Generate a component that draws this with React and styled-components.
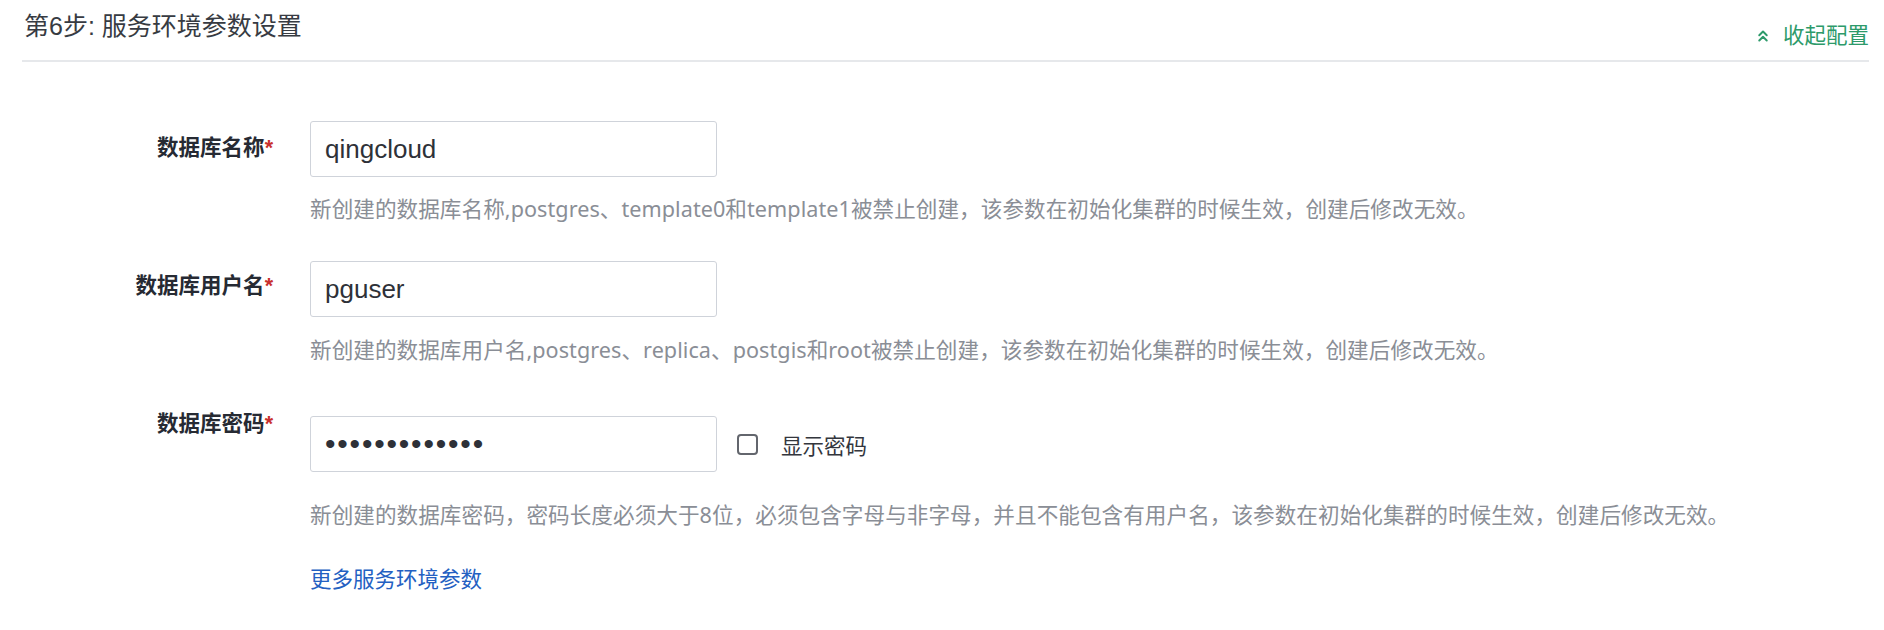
import React from "react";
import styled, { createGlobalStyle } from "styled-components";
import { ChevronsUp } from "lucide-react";

const GlobalStyle = createGlobalStyle`
    body {
        margin: 0;
        background: #ffffff;
        font-family: "Liberation Sans", "Noto Sans CJK SC", sans-serif;
    }
`

const Page = styled.div`
    width: 1884px;
    height: 630px;
    overflow: hidden;
`

const Header = styled.div`
    margin: 0 15px 0 22px;
    height: 60px;
    border-bottom: 2px solid #e6e8eb;
    display: flex;
    justify-content: space-between;
    align-items: flex-start;
`

const Title = styled.div`
    padding: 8px 0 0 2px;
    font-size: 25px;
    line-height: 36px;
    color: #373b42;
`

const Toggle = styled.div`
    padding-top: 21px;
    display: flex;
    align-items: center;
    gap: 11px;
    font-size: 21.5px;
    line-height: 30px;
    color: #2d9a6a;
    cursor: pointer;
`

const Form = styled.div`
    padding-top: 59px;
    display: flex;
    flex-direction: column;
`

const Row = styled.div`
    display: flex;
    align-items: flex-start;
    margin-top: ${p => p.$gap || 0}px;
`

const Label = styled.div`
    width: 273px;
    flex-shrink: 0;
    padding-top: ${p => p.$offset}px;
    text-align: right;
    font-size: 21.5px;
    font-weight: 700;
    line-height: 30px;
    color: #262a33;
`

const Star = styled.span`
    color: #c9302c;
`

const Field = styled.div`
    margin-left: 37px;
    display: flex;
    flex-direction: column;
    padding-top: ${p => p.$offset || 0}px;
`

const InputLine = styled.div`
    display: flex;
    align-items: center;
`

const Input = styled.input`
    box-sizing: border-box;
    width: 407px;
    height: 56px;
    padding: 0 14px;
    border: 1px solid #cfd3da;
    border-radius: 3px;
    font-family: "Liberation Sans", sans-serif;
    font-size: ${p => p.type === "password" ? 30 : 26}px;
    letter-spacing: ${p => p.type === "password" ? "1.8px" : "normal"};
    color: #2e3138;
    outline: none;
    background: #ffffff;
`

const CheckLabel = styled.label`
    margin-left: 20px;
    display: flex;
    align-items: center;
    gap: 23px;
    font-size: 21.5px;
    color: #33363d;
    cursor: pointer;
`

const Box = styled.span`
    box-sizing: border-box;
    width: 21px;
    height: 21px;
    border: 2px solid #63666d;
    border-radius: 4px;
    background: #ffffff;
`

const Help = styled.div`
    margin-top: ${p => p.$gap}px;
    font-family: "Noto Sans", "Noto Sans CJK SC", sans-serif;
    font-size: 21.6px;
    letter-spacing: 0.05px;
    line-height: 30px;
    color: #8a8e96;
    white-space: nowrap;
`

const MoreLink = styled.a`
    margin-top: 35px;
    font-size: 21.5px;
    line-height: 30px;
    color: #2360c2;
    text-decoration: none;
    cursor: pointer;
`

const App = () => {
    return(
        <Page>
            <GlobalStyle />
            <Header>
                <Title>第6步: 服务环境参数设置</Title>
                <Toggle>
                    <ChevronsUp size={18} strokeWidth={2.6} />
                    收起配置
                </Toggle>
            </Header>
            <Form>
                <Row>
                    <Label $offset={12}>数据库名称<Star>*</Star></Label>
                    <Field>
                        <Input defaultValue="qingcloud" />
                        <Help $gap={17}>新创建的数据库名称,postgres、template0和template1被禁止创建，该参数在初始化集群的时候生效，创建后修改无效。</Help>
                    </Field>
                </Row>
                <Row $gap={37}>
                    <Label $offset={10}>数据库用户名<Star>*</Star></Label>
                    <Field>
                        <Input defaultValue="pguser" />
                        <Help $gap={18}>新创建的数据库用户名,postgres、replica、postgis和root被禁止创建，该参数在初始化集群的时候生效，创建后修改无效。</Help>
                    </Field>
                </Row>
                <Row $gap={31}>
                    <Label $offset={13}>数据库密码<Star>*</Star></Label>
                    <Field $offset={20}>
                        <InputLine>
                            <Input type="password" defaultValue="qingcloud1234" />
                            <CheckLabel>
                                <Box />
                                显示密码
                            </CheckLabel>
                        </InputLine>
                        <Help $gap={28}>新创建的数据库密码，密码长度必须大于8位，必须包含字母与非字母，并且不能包含有用户名，该参数在初始化集群的时候生效，创建后修改无效。</Help>
                        <MoreLink>更多服务环境参数</MoreLink>
                    </Field>
                </Row>
            </Form>
        </Page>
    )
}

export default App;
